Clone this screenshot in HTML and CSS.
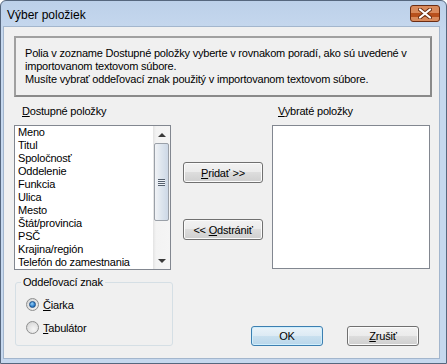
FILE: index.html
```html
<!DOCTYPE html>
<html lang="sk">
<head>
    <meta charset="UTF-8" />
    <title>Výber položiek</title>
    <link rel="stylesheet" href="styles.css">
</head>
<body>
    <div class="window">
        <div class="titlebar">
            <span class="title">Výber položiek</span>
            <div class="close">
                <span class="close-band"></span>
                <svg class="close-x" width="14" height="11" viewBox="0 0 14 11">
                    <path d="M2 1.5 L12 9.5 M12 1.5 L2 9.5" stroke="#6a2e12" stroke-width="4" stroke-linecap="round" fill="none"/>
                    <path d="M2 1.5 L12 9.5 M12 1.5 L2 9.5" stroke="#ffffff" stroke-width="2.2" stroke-linecap="round" fill="none"/>
                </svg>
            </div>
        </div>

        <div class="client">
            <div class="info">
                Polia v zozname Dostupné položky vyberte v rovnakom poradí, ako sú uvedené v<br>
                importovanom textovom súbore.<br>
                Musíte vybrať oddeľovací znak použitý v importovanom textovom súbore.
            </div>

            <div class="lists">
                <div class="col col-left">
                    <label class="caption"><u>D</u>ostupné položky</label>
                    <div class="listbox">
                        <ul class="items">
                            <li>Meno</li>
                            <li>Titul</li>
                            <li>Spoločnosť</li>
                            <li>Oddelenie</li>
                            <li>Funkcia</li>
                            <li>Ulica</li>
                            <li>Mesto</li>
                            <li>Štát/provincia</li>
                            <li>PSČ</li>
                            <li>Krajina/región</li>
                            <li>Telefón do zamestnania</li>
                        </ul>
                        <div class="scrollbar">
                            <div class="arrow"><span class="tri up"></span></div>
                            <div class="track">
                                <div class="thumb"><span class="grip"></span></div>
                            </div>
                            <div class="arrow"><span class="tri down"></span></div>
                        </div>
                    </div>
                </div>

                <div class="mid">
                    <button class="btn btn-move"><u>P</u>ridať &gt;&gt;</button>
                    <button class="btn btn-move">&lt;&lt; <u>O</u>dstrániť</button>
                </div>

                <div class="col col-right">
                    <label class="caption"><u>V</u>ybraté položky</label>
                    <div class="listbox empty"></div>
                </div>
            </div>

            <div class="bottom">
                <fieldset class="group">
                    <legend>Oddeľovací znak</legend>
                    <div class="radio-row"><span class="radio checked"></span><span><u>Č</u>iarka</span></div>
                    <div class="radio-row"><span class="radio"></span><span><u>T</u>abulátor</span></div>
                </fieldset>
                <div class="actions">
                    <button class="btn btn-default">OK</button>
                    <button class="btn"><u>Z</u>rušiť</button>
                </div>
            </div>
        </div>
    </div>
</body>
</html>
```

FILE: styles.css
```css
body { margin: 0; font-family: "Liberation Sans", Arial, sans-serif; font-size: 11px; letter-spacing: -0.2px; color: #000; }
u { text-decoration: underline; text-underline-offset: 1px; }

.window { width: 447px; height: 364px; box-sizing: border-box; display: flex; flex-direction: column;
    border: 1px solid #56677e; border-radius: 6px 6px 0 0; padding: 0 6px 4px 2px;
    background: linear-gradient(#bcd0e9, #c6d8ee 30px, #c6d8ee); }

.titlebar { height: 25px; display: flex; align-items: flex-start; justify-content: space-between; }
.title { font-size: 12px; letter-spacing: 0; margin: 7px 0 0 4px; line-height: 14px; }
.close { width: 30px; height: 17px; box-sizing: border-box; margin-top: 4px; border: 1px solid #6b2d14; border-radius: 3px;
    position: relative; display: flex; align-items: center; justify-content: center;
    background: #d98a5c; overflow: hidden; }
.close-band { position: absolute; left: 0; right: 0; top: 7px; height: 4px; background: #b8501c; }
.close-x { position: relative; }

.client { flex: 1; background: #f0f0f0; border: 1px solid #a3b6cd; padding: 9px 7px 0 10px; }

.info { height: 39px; border: 2px solid #8c8c8c; border-color: #a0a0a0 #8a8a8a #8a8a8a #a0a0a0; padding: 9px 9px; line-height: 13px; white-space: nowrap; }

.lists { display: flex; align-items: flex-start; margin-top: 8px; }
.col { display: flex; flex-direction: column; }
.col-left { width: 157px; }
.col-right { width: 158px; margin-left: 9px; }
.caption { line-height: 13px; margin: 0 0 7px 8px; }
.col-right .caption { margin-left: 6px; }

.listbox { height: 145px; box-sizing: border-box; border: 1px solid #828790; background: #fff; display: flex; }
.listbox.empty { height: 144px; }
.items { list-style: none; margin: 0; padding: 0 0 0 3px; flex: 1; line-height: 13px; white-space: nowrap; overflow: hidden; }

.scrollbar { width: 17px; display: flex; flex-direction: column; background: linear-gradient(90deg, #e3e3e3, #f3f3f3 3px, #f5f5f5); }
.arrow { height: 17px; display: flex; align-items: center; justify-content: center; }
.tri { width: 0; height: 0; border-left: 4px solid transparent; border-right: 4px solid transparent; }
.tri.up { border-bottom: 4px solid #3a3a3a; }
.tri.down { border-top: 4px solid #3a3a3a; }
.track { flex: 1; }
.thumb { height: 78px; margin: 0 1px; box-sizing: border-box; border: 1px solid #9aa0a8; border-radius: 2px;
    background: linear-gradient(90deg, #f1f3f6, #dde5ee 50%, #cdd8e6); display: flex; align-items: center; justify-content: center; }
.grip { width: 7px; height: 7px; background: repeating-linear-gradient(#55606e 0 1px, #eef2f7 1px 2px); }

.mid { width: 80px; margin-left: 12px; padding-top: 57px; display: flex; flex-direction: column; gap: 36px; }

.btn { height: 21px; box-sizing: border-box; padding: 0; font-family: inherit; font-size: 11px; letter-spacing: -0.2px; color: #000;
    border: 1px solid #707070; border-radius: 3px; cursor: pointer;
    background: linear-gradient(#f2f2f2 0%, #ebebeb 50%, #dddddd 50%, #cfcfcf 100%);
    box-shadow: inset 0 0 0 1px #fbfbfb; }
.btn-move { width: 80px; }
.btn-default { border-color: #3c7fb1; background: linear-gradient(#eaf3f9 0%, #dceaf4 50%, #c9e0ef 50%, #b9d6ea 100%);
    box-shadow: inset 0 0 0 1px #cfeefc; }

.bottom { display: flex; align-items: flex-end; margin-top: 6px; }
.group { width: 158px; height: 70px; box-sizing: border-box; margin: 0 0 0 1px; padding: 0 0 0 5px;
    border: 1px solid #d5dfe5; border-radius: 3px; }
.group legend { padding: 0 2px; line-height: 13px; }
.radio-row { display: flex; align-items: center; gap: 4px; height: 13px; padding-left: 5px; margin-top: 10px; }
.radio-row:first-of-type { margin-top: 9px; }
.radio { width: 13px; height: 13px; box-sizing: border-box; border-radius: 50%; border: 1px solid #8e8f8f;
    background: radial-gradient(circle at 60% 65%, #f6f6f6, #e2e2e2 55%, #c8c8c8); position: relative; }
.radio.checked::after { content: ""; position: absolute; left: 2px; top: 2px; width: 7px; height: 7px; box-sizing: border-box; border-radius: 50%;
    border: 1px solid #1c4f86; background: radial-gradient(circle at 40% 35%, #9ad2f7, #2d7fcd 60%, #1a5aa0); }

.actions { margin-left: auto; margin-right: 13px; display: flex; gap: 24px; }
.actions .btn { width: 72px; height: 20px; }
```
